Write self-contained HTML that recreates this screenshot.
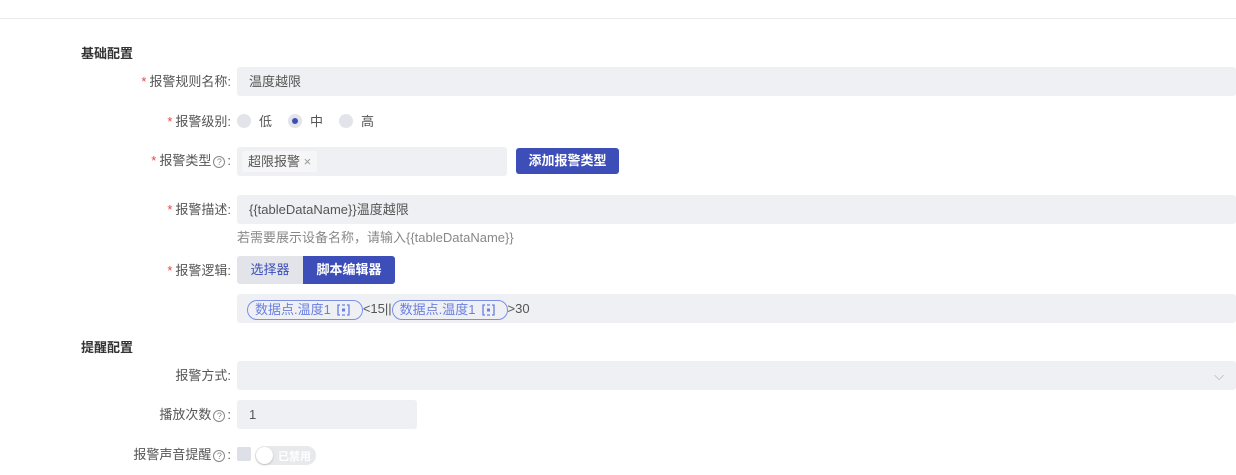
<!DOCTYPE html>
<html><head><meta charset="utf-8"><style>
*{box-sizing:border-box;margin:0;padding:0}
body{width:1236px;height:475px;background:#fff;font-family:"Liberation Sans","Noto Sans CJK SC",sans-serif;font-size:13px;color:#555;position:relative;overflow:hidden}
.a{position:absolute}
.line{left:0;top:18px;width:1236px;height:1px;background:#ececec}
.sec{left:81px;font-weight:bold;color:#333;font-size:13px}
.lbl{right:1005px;text-align:right;white-space:nowrap;line-height:29px;height:29px;color:#555}
.lbl i{color:#f04040;font-style:normal;margin-right:3px}
.inp{background:#eff0f3;border-radius:3px;line-height:29px;height:29px;padding-left:12px;color:#555;white-space:nowrap}
.q{display:inline-block;width:12px;height:12px;border:1px solid #888;border-radius:50%;font-size:9px;line-height:10px;text-align:center;color:#888;vertical-align:0px;margin:0 2px}
.rad{display:inline-block;width:14px;height:14px;border-radius:50%;background:#e2e4ea;vertical-align:-2px;margin-right:8px;position:relative}
.chip{display:inline-block;border:1px solid #7b8fe8;border-radius:10px;color:#6a7fe0;height:20px;line-height:18px;padding:0 8px 0 7px;vertical-align:middle;white-space:nowrap}
.chip svg{vertical-align:-2px;margin-left:6px;margin-right:4px}
</style></head><body>
<div class="a line"></div>
<div class="a sec" style="top:43px">基础配置</div>
<div class="a lbl" style="top:67px"><i>*</i>报警规则名称:</div>
<div class="a inp" style="left:237px;top:67px;width:999px">温度越限</div>
<div class="a lbl" style="top:107px"><i>*</i>报警级别:</div>
<div class="a" style="left:237px;top:107px;line-height:29px">
<span class="rad"></span>低<span style="display:inline-block;width:16px"></span><span class="rad"><span style="position:absolute;left:4px;top:4px;width:6px;height:6px;border-radius:50%;background:#3d4eb8"></span></span>中<span style="display:inline-block;width:16px"></span><span class="rad"></span>高</div>
<div class="a lbl" style="top:146px"><i>*</i>报警类型<span class="q">?</span>:</div>
<div class="a inp" style="left:237px;top:147px;width:270px;padding-left:5px"><span style="background:#f6f6f8;padding:3px 6px;border-radius:2px">超限报警 <span style="color:#999">×</span></span></div>
<div class="a" style="left:516px;top:148px;width:103px;height:26px;background:#3d4eb8;border-radius:3px;color:#fff;font-weight:bold;text-align:center;line-height:26px">添加报警类型</div>
<div class="a lbl" style="top:195px"><i>*</i>报警描述:</div>
<div class="a inp" style="left:237px;top:195px;width:999px">{{tableDataName}}温度越限</div>
<div class="a" style="left:237px;top:227px;color:#888">若需要展示设备名称，请输入{{tableDataName}}</div>
<div class="a lbl" style="top:256px"><i>*</i>报警逻辑:</div>
<div class="a" style="left:237px;top:256px;width:66px;height:28px;background:#e2e4ea;color:#3d4eb8;line-height:28px;text-align:center;border-radius:3px 0 0 3px">选择器</div>
<div class="a" style="left:303px;top:256px;width:92px;height:28px;background:#3d4eb8;color:#fff;font-weight:bold;line-height:28px;text-align:center;border-radius:0 3px 3px 0">脚本编辑器</div>
<div class="a inp" style="left:237px;top:294px;width:999px;padding-left:10px"><span class="chip">数据点.温度1<svg width="13" height="12" viewBox="0 0 13 12" fill="none" stroke="#6a7fe0" stroke-width="1.3"><path d="M3 1H1V11H3M10 1H12V11H10M5 1H8M5 11H8"/><rect x="5" y="4.5" width="3" height="3" fill="#6a7fe0" stroke="none"/></svg></span>&lt;15||<span class="chip">数据点.温度1<svg width="13" height="12" viewBox="0 0 13 12" fill="none" stroke="#6a7fe0" stroke-width="1.3"><path d="M3 1H1V11H3M10 1H12V11H10M5 1H8M5 11H8"/><rect x="5" y="4.5" width="3" height="3" fill="#6a7fe0" stroke="none"/></svg></span>&gt;30</div>
<div class="a sec" style="top:337px">提醒配置</div>
<div class="a lbl" style="top:361px">报警方式:</div>
<div class="a inp" style="left:237px;top:361px;width:999px"><span style="position:absolute;right:12px;color:#aaa">⌵</span></div>
<div class="a lbl" style="top:400px">播放次数<span class="q">?</span>:</div>
<div class="a inp" style="left:237px;top:400px;width:180px">1</div>
<div class="a lbl" style="top:440px">报警声音提醒<span class="q">?</span>:</div>
<div class="a" style="left:237px;top:447px;width:14px;height:14px;background:#dde0e6;border-radius:2px"></div>
<div class="a" style="left:255px;top:446px;width:61px;height:19px;background:#e8e9ec;border-radius:10px"><div style="position:absolute;left:1px;top:1px;width:17px;height:17px;border-radius:50%;background:#fff;box-shadow:0 1px 2px rgba(0,0,0,.2)"></div><span style="position:absolute;left:23px;top:2px;font-size:11px;color:#fff;font-weight:bold">已禁用</span></div>
</body></html>
